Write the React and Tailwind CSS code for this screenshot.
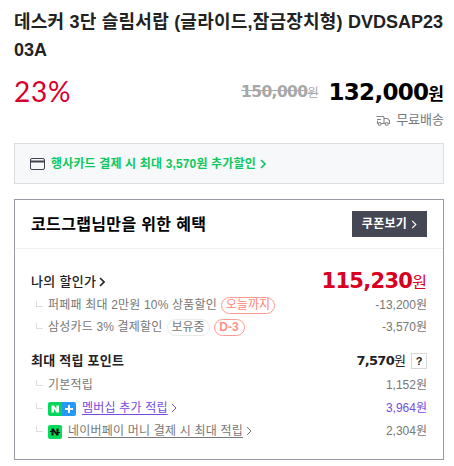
import React from "react";

const discounts = [
  { label: "퍼페패 최대 2만원 10% 상품할인", tags: [{ text: "오늘까지", type: "red" }], price: "-13,200" },
  {
    label: "삼성카드 3% 결제할인",
    tags: [
      { text: "보유중", type: "gray" },
      { text: "D-3", type: "bold" },
    ],
    price: "-3,570",
  },
];

const tagStyles = {
  red: "w-[54px] border-[#ff9a90] text-[#ff8578]",
  gray: "w-[43px] border-[#e8eaea] text-[#777]",
  bold: "w-[31px] border-[#ff9a90] text-[#ff9187] font-bold",
};

const Chevron = ({ className, stroke = 1.3 }) => (
  <svg viewBox="0 0 6 10" fill="none" stroke="currentColor" strokeWidth={stroke} className={`w-[6px] shrink-0 ${className}`}>
    <path d="M1 1l4 4-4 4" />
  </svg>
);

const Branch = () => (
  <span className="mr-[5px] mb-[3px] ml-[5px] h-[6px] w-[7px] shrink-0 border-b border-l border-[#dcdcdc]" />
);

const CardIcon = () => (
  <svg viewBox="0 0 15 12" className="h-3 w-[15px] shrink-0" fill="none" stroke="#41424f">
    <rect x="0.5" y="0.5" width="14" height="11" rx="1.5" />
    <path d="M1 3.5h13" strokeWidth="2" />
  </svg>
);

const TruckIcon = () => (
  <svg viewBox="0 0 14 11" className="h-[11px] w-[14px] shrink-0" fill="none" stroke="#858585" strokeWidth="1.1">
    <path d="M.5 1.500h6.500a1 1 0 0 1 1 1v6H5M1.500 5.500v3h.800M1 4.500h4M8 3.500h3.500l2 2.300v2.700h-1.200M9.300 8.500H8" />
    <circle cx="3.700" cy="8.900" r="1.400" />
    <circle cx="10.800" cy="8.900" r="1.400" />
  </svg>
);

const MembershipIcon = () => (
  <svg viewBox="0 0 28 14" className="mt-[3px] h-[14px] w-7 shrink-0">
    <path d="M2 0h12v14H2a2 2 0 0 1-2-2V2a2 2 0 0 1 2-2z" fill="#05d65c" />
    <path d="M14 0h12a2 2 0 0 1 2 2v10a2 2 0 0 1-2 2H14z" fill="#2499f8" />
    <path d="M3.500 3.500h2.600l2.300 3.500V3.500H11v7H8.400L6.100 7v3.500H3.500z" fill="#fff" />
    <path d="M21 3v8M17 7h8" stroke="#fff" strokeWidth="2" />
  </svg>
);

const PayIcon = () => (
  <svg viewBox="0 0 14 14" className="mt-[3px] h-[14px] w-[14px] shrink-0">
    <rect width="14" height="14" rx="2" fill="#04dc5b" />
    <path d="M3.500 3.500h2l3 4v-4h2v7h-2l-3-4v4h-2z" fill="#111" />
    <path d="M2 6.500h3M9 7.500h3" stroke="#111" />
  </svg>
);

const App = () => {
  return (
    <div className="h-[466px] w-[454px] bg-white px-[14px] pr-[10px] font-['Liberation_Sans','Noto_Sans_CJK_KR',sans-serif] text-xs whitespace-nowrap text-[#777]">
      <h1 className="pt-2 text-[18px] leading-7 font-bold text-[#222]">
        <span className="tracking-[0.22px]">데스커 3단 슬림서랍 (글라이드,잠금장치형) </span>DVDSAP23
        <br />
        03A
      </h1>

      <div className="flex h-[46px] items-center justify-between pt-[10px]">
        <span className="font-['Lato'] text-[28px] tracking-[0.8px] text-[#d7002b]">23%</span>
        <div className="flex items-center">
          <span className="mr-[10px] text-[#a8a8a8] line-through">
            <b className="font-['DejaVu_Sans','Noto_Sans'] text-[15.5px] tracking-[-0.6px]">150,000</b>원
          </span>
          <span className="text-[17px] font-bold text-black">
            <b className="font-['DejaVu_Sans','Noto_Sans'] text-[23px] tracking-[-0.7px]">132,000</b>원
          </span>
        </div>
      </div>
      <div className="flex h-5 items-center justify-end gap-[6px] text-[13px]">
        <TruckIcon />
        <span>무료배송</span>
      </div>

      <div className="mt-[13px] flex h-[41px] items-center border border-[#d9dee2] bg-[#f7f8fa] pl-[15px] font-bold text-[#0cc85e]">
        <CardIcon />
        <span className="ml-[6px] tracking-[0.15px]">행사카드 결제 시 최대 3,570원 추가할인</span>
        <Chevron className="ml-1 h-[10px]" stroke={1.6} />
      </div>

      <section className="mt-[15px] h-[261px] border border-[#9998a3]">
        <div className="flex h-[49px] items-center justify-between border-b border-[#f1f1f1] px-4">
          <h2 className="pt-[2px] text-base font-bold tracking-[0.35px] text-black">코드그랩님만을 위한 혜택</h2>
          <button className="flex h-[26px] w-[75px] items-center justify-center gap-1 bg-[#454754] text-xs font-bold tracking-[0.3px] text-white">
            쿠폰보기
            <Chevron className="h-[9px]" />
          </button>
        </div>

        <div className="px-4 pt-[21px]">
          <div className="flex h-6 items-center">
            <span className="text-[13px] font-medium tracking-[0.3px] text-[#222]">나의 할인가</span>
            <Chevron className="ml-[3px] h-[10px] text-[#222]" stroke={1.6} />
            <span className="ml-auto text-base text-[#d9001f]">
              <b className="font-['DejaVu_Sans','Noto_Sans'] text-[21px] tracking-[-0.7px]">115,230</b>원
            </span>
          </div>
          {discounts.map((item) => (
            <div key={item.price} className="flex h-[22px] items-center">
              <Branch />
              <span className="tracking-[0.18px]">{item.label}</span>
              {item.tags.map((tag) => (
                <span key={tag.text} className={`ml-1 flex h-[17px] items-center justify-center rounded-full border text-xs ${tagStyles[tag.type]}`}>
                  {tag.text}
                </span>
              ))}
              <span className="ml-auto">{item.price}원</span>
            </div>
          ))}

          <div className="mt-[11px] flex h-6 items-center text-[13px] text-[#222]">
            <span className="font-bold tracking-[0.25px]">최대 적립 포인트</span>
            <span className="ml-auto">
              <b className="font-['DejaVu_Sans','Noto_Sans'] text-[13px] tracking-[-0.7px]">7,570</b>원
            </span>
            <span className="ml-[5px] flex h-4 w-4 items-center justify-center border border-[#d8d8d8] text-[11px] font-bold">?</span>
          </div>
          <div className="flex h-[23px] items-center">
            <Branch />
            <span className="tracking-[0.2px]">기본적립</span>
            <span className="ml-auto">1,152원</span>
          </div>
          <div className="flex h-[23px] items-center text-[#754ce0]">
            <Branch />
            <MembershipIcon />
            <span className="ml-[6px] tracking-[0.2px] underline underline-offset-2">멤버십 추가 적립</span>
            <Chevron className="ml-[3px] h-[10px]" stroke={1} />
            <span className="ml-auto">3,964원</span>
          </div>
          <div className="flex h-[23px] items-center">
            <Branch />
            <PayIcon />
            <span className="ml-[6px] tracking-[0.2px] underline underline-offset-2">네이버페이 머니 결제 시 최대 적립</span>
            <Chevron className="ml-[3px] h-[10px]" stroke={1} />
            <span className="ml-auto">2,304원</span>
          </div>
        </div>
      </section>
    </div>
  );
};

export default App;
